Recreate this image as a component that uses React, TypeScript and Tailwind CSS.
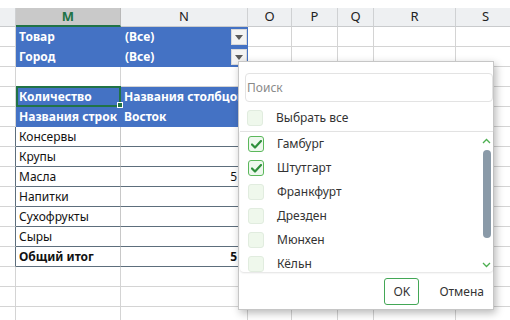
import React from 'react';

const COLS = [
  { id: 'L', w: 16 },
  { id: 'M', w: 105 },
  { id: 'N', w: 127 },
  { id: 'O', w: 44 },
  { id: 'P', w: 46 },
  { id: 'Q', w: 36 },
  { id: 'R', w: 82 },
  { id: 'S', w: 60 },
];

const DATA = ['Консервы', 'Крупы', 'Масла', 'Напитки', 'Сухофрукты', 'Сыры'];
const CITIES = [
  { name: 'Гамбург', on: true },
  { name: 'Штутгарт', on: true },
  { name: 'Франкфурт', on: false },
  { name: 'Дрезден', on: false },
  { name: 'Мюнхен', on: false },
  { name: 'Кёльн', on: false },
];

function DropBtn() {
  return (
    <div className="w-[16px] h-[16px] bg-[#f3f3f3] border border-[#d9d9d9] flex items-center justify-center mr-[1px]">
      <svg width="8" height="5" viewBox="0 0 8 5">
        <path d="M0 0h8L4 5z" fill="#5b5b5b" />
      </svg>
    </div>
  );
}

function Check({ on }: { on: boolean }) {
  if (on) {
    return (
      <div className="w-[16px] h-[16px] rounded-[3px] border-[1.5px] border-[#5cb85c] bg-[#eef8ee] flex items-center justify-center shrink-0">
        <svg width="11" height="9" viewBox="0 0 11 9">
          <path d="M1 4.5l3 3L10 1" fill="none" stroke="#2f8f3c" strokeWidth="2.2" strokeLinecap="round" strokeLinejoin="round" />
        </svg>
      </div>
    );
  }
  return <div className="w-[16px] h-[16px] rounded-[3px] border border-[#e1ecdf] bg-[#eff8ec] shrink-0" />;
}

// one sheet row; m and n fill the pivot columns
function GridRow({ m, n, blue, dark }: { m?: React.ReactNode; n?: React.ReactNode; blue?: boolean; dark?: boolean }) {
  return (
    <div className="flex h-[20px]">
      {COLS.map((c, i) => {
        const isPivot = i === 1 || i === 2;
        let cls = 'border-b border-r border-[#d4d4d4] bg-white';
        if (isPivot && blue) cls = 'bg-[#4472c4] text-white font-bold';
        else if (isPivot && dark) {
          cls = `bg-white border-b border-[#5d6e7c] border-r ${i === 1 ? 'border-r-[#c8c8c8]' : 'border-r-[#d4d4d4]'}`;
        } else if (i === 0 && dark) cls = 'border-b border-[#d4d4d4] border-r border-r-[#5d6e7c] bg-white';
        return (
          <div key={c.id} style={{ width: c.w }} className={`${cls} h-full shrink-0 flex items-center overflow-hidden whitespace-nowrap`}>
            {i === 1 ? m : i === 2 ? n : null}
          </div>
        );
      })}
    </div>
  );
}

export default function App() {
  return (
    <div className="relative w-[510px] h-[320px] overflow-hidden bg-white text-[12px] text-[#111]" style={{ fontFamily: '"Noto Sans", "Open Sans", sans-serif' }}>
      <div className="h-[8px]" />
      {/* column headers */}
      <div className="flex h-[19px] text-[13px]">
        {COLS.map((c) =>
          c.id === 'M' ? (
            <div key={c.id} style={{ width: c.w }} className="shrink-0 bg-[#c9c9c9] border-b-2 border-[#217346] border-r border-r-[#b8b8b8] flex items-center justify-center font-bold text-[#217346]">
              M
            </div>
          ) : (
            <div key={c.id} style={{ width: c.w }} className="shrink-0 bg-[#eef0f2] border-b border-[#c9cbcd] border-r border-r-[#cfd1d3] flex items-center justify-center text-[#222]">
              {c.id === 'L' ? '' : c.id}
            </div>
          )
        )}
      </div>

      <GridRow blue m={<span className="pl-[3px]">Товар</span>} n={<div className="flex w-full items-center justify-between pl-[4px]"><span>(Все)</span><DropBtn /></div>} />
      <GridRow blue m={<span className="pl-[3px]">Город</span>} n={<div className="flex w-full items-center justify-between pl-[4px]"><span>(Все)</span><DropBtn /></div>} />
      <GridRow />
      <GridRow blue m={<span className="pl-[3px]">Количество</span>} n={<span className="pl-[3px]">Названия столбцов</span>} />
      <GridRow blue m={<span className="pl-[3px]">Названия строк</span>} n={<span className="pl-[3px]">Восток</span>} />
      {DATA.map((d) => (
        <GridRow key={d} dark m={<span className="pl-[3px]">{d}</span>} n={d === 'Масла' ? <span className="ml-auto pr-[10px]">5</span> : null} />
      ))}
      <GridRow dark m={<span className="pl-[3px] font-bold">Общий итог</span>} n={<span className="ml-auto pr-[10px] font-bold">5</span>} />
      <GridRow />
      <GridRow />
      <GridRow />

      {/* selected cell */}
      <div className="absolute left-[16px] top-[86px] w-[105px] h-[21px] border-2 border-[#217346]" />
      <div className="absolute left-[117px] top-[102px] w-[6px] h-[6px] bg-[#217346] border border-white" />

      {/* filter popup */}
      <div className="absolute left-[238px] top-[61px] w-[256px] h-[249px] bg-white border border-[#c6c6c6] shadow-[2px_3px_8px_rgba(0,0,0,0.28)] text-[#333] text-[12px]">
        <div className="pl-[6px] pt-[11px]">
          <div className="h-[29px] border border-[#e3e3e3] rounded-[4px] flex items-center pl-[1px] text-[#8a8a8a]">Поиск</div>
        </div>
        <div className="flex items-center h-[20px] mt-[6px] pl-[8px] gap-[13px]">
          <Check on={false} />
          <span>Выбрать все</span>
        </div>
        <div className="relative mt-[3px] ml-[1px] h-[141px] border-t border-[#e2e2e2] rounded-b-[4px] shadow-[0_1px_2px_rgba(0,0,0,0.12)] overflow-hidden">
          <div>
            {CITIES.map((c) => (
              <div key={c.name} className="flex items-center h-[24px] pl-[8px] gap-[13px]">
                <Check on={c.on} />
                <span>{c.name}</span>
              </div>
            ))}
          </div>
          <svg className="absolute left-[242px] top-[6px]" width="9" height="6" viewBox="0 0 9 6">
            <path d="M1 5l3.5-3.5L8 5" fill="none" stroke="#4caf50" strokeWidth="1.3" />
          </svg>
          <div className="absolute left-[243px] top-[18px] w-[8px] h-[88px] rounded-full bg-[#8a9aa8]" />
          <svg className="absolute left-[242px] top-[130px]" width="9" height="6" viewBox="0 0 9 6">
            <path d="M1 1l3.5 3.5L8 1" fill="none" stroke="#4caf50" strokeWidth="1.3" />
          </svg>
        </div>
        <div className="flex items-center justify-end gap-[20px] pr-[9px] mt-[6px] text-[12px]">
          <div className="w-[35px] h-[27px] border border-[#43a756] rounded-[3px] flex items-center justify-center">OK</div>
          <span>Отмена</span>
        </div>
      </div>
    </div>
  );
}
